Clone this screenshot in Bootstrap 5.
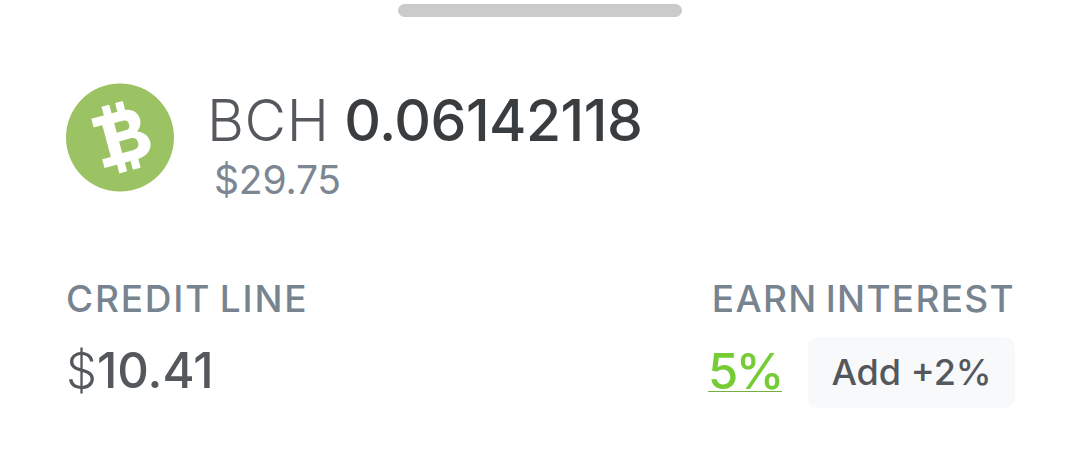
<!DOCTYPE html>
<html lang="en">
<head>
    <meta charset="UTF-8">
    <meta name="viewport" content="width=device-width, initial-scale=1.0">
    <title>BCH</title>
    <link rel="stylesheet" href="https://cdn.jsdelivr.net/npm/bootstrap@5.3.6/dist/css/bootstrap.min.css">
    <script src="https://cdn.jsdelivr.net/npm/bootstrap@5.3.6/dist/js/bootstrap.bundle.min.js"></script>
    <style>
        body { font-family: "Inter", "Liberation Sans", sans-serif; background: #fff; height: 452px; overflow: hidden; }
        .sheet { padding: 4px 65px 0 66px; }
        .grab { width: 284px; height: 13px; background: #cbcbcb; border-radius: 7px; margin: 0 0 66px 332px; }
        .coin { width: 108px; height: 109px; flex: none; }
        .amount { font-size: 57px; line-height: 76px; color: #3a3d40; font-weight: 500; letter-spacing: -.5px; }
        .amount span { color: #55595d; font-weight: 300; letter-spacing: .6px; }
        .fiat { font-size: 39px; line-height: 44px; color: #7c8793; margin-left: 7px; margin-top: -1px; letter-spacing: -.2px; }
        .info { margin-left: 33px; }
        .caps { font-size: 37px; line-height: 44px; color: #77838f; font-weight: 500; letter-spacing: 1.3px; word-spacing: -3px; }
        .caps-wide { letter-spacing: 1.8px; }
        .credit { font-size: 49px; line-height: 60px; color: #54585c; font-weight: 500; margin-top: 20px; }
        .credit span { font-weight: 300; }
        .earn { margin-top: 16px; gap: 26px; }
        .rate { font-size: 49px; line-height: 38px; color: #76cc34; border-bottom: 1px solid #76b043; font-weight: 500; letter-spacing: -2.5px; }
        .addbtn { background: #f8f9fb; color: #54585c; border-radius: 10px; font-size: 36px; font-weight: 500; line-height: 71px; width: 207px; text-align: center; }
        .lower { margin-top: 75px; }
    </style>
</head>
<body>
    <div class="sheet">
        <div class="grab"></div>
        <div class="d-flex align-items-start">
            <svg class="coin" viewBox="0 0 108 109">
                <circle cx="54" cy="54.5" r="54" fill="#9bc263"/>
                <g fill="#fff" transform="rotate(-15 54 54)">
                    <rect x="44" y="20" width="8" height="12"/>
                    <rect x="58" y="20" width="8" height="12"/>
                    <rect x="44" y="77" width="8" height="12"/>
                    <rect x="58" y="77" width="8" height="12"/>
                    <path fill-rule="evenodd" d="M31 29H63C73 29 78 35 78 42C78 47 75 51 72 53C78 55 82 60 82 66C82 74 75 80 65 80H31V71H40V38H31ZM52 39V49H61C65 49 66 47 66 44C66 41 65 39 61 39ZM52 58V70H63C68 70 70 68 70 64C70 60 68 58 63 58Z"/>
                </g>
            </svg>
            <div class="info">
                <div class="amount"><span>BCH</span> 0.06142118</div>
                <div class="fiat">$29.75</div>
            </div>
        </div>
        <div class="d-flex justify-content-between align-items-start lower">
            <div>
                <div class="caps caps-wide">CREDIT LINE</div>
                <div class="credit"><span>$</span>10.41</div>
            </div>
            <div class="text-end">
                <div class="caps">EARN INTEREST</div>
                <div class="d-flex align-items-center justify-content-end earn">
                    <span class="rate">5%</span>
                    <span class="addbtn">Add +2%</span>
                </div>
            </div>
        </div>
    </div>
</body>
</html>
